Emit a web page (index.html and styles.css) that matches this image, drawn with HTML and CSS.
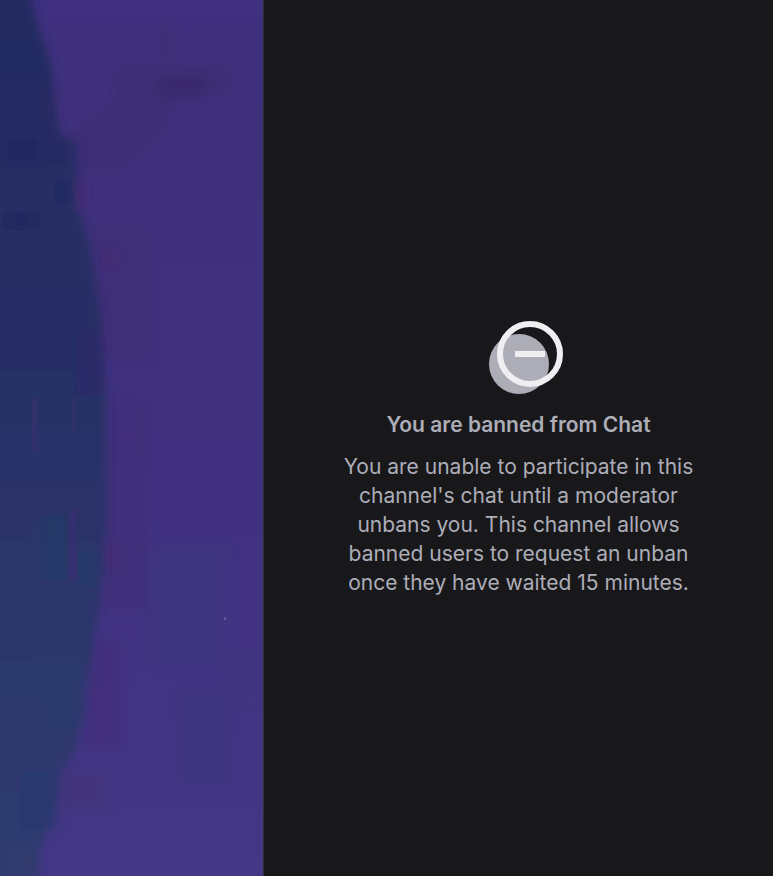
FILE: index.html
```
<!DOCTYPE html>
<html lang="en">
	<head>
		<meta charset="UTF-8">
		<meta name="viewport" content="width=device-width, initial-scale=1">
		<title>Chat</title>
		<link rel="stylesheet" href="styles.css">
	</head>

	<body>
		<div class="channel">
			<main class="player">
				<svg class="video" viewBox="0 0 263 876" preserveAspectRatio="none" aria-hidden="true">
					<defs>
						<linearGradient id="purple" x1="0" y1="0" x2="0" y2="1">
							<stop offset="0" stop-color="#3f3080"/>
							<stop offset="0.15" stop-color="#3f307b"/>
							<stop offset="0.5" stop-color="#403180"/>
							<stop offset="1" stop-color="#443786"/>
						</linearGradient>
						<linearGradient id="navy" x1="0" y1="0" x2="0" y2="1">
							<stop offset="0" stop-color="#242a61"/>
							<stop offset="0.45" stop-color="#273066"/>
							<stop offset="0.8" stop-color="#2d386c"/>
							<stop offset="1" stop-color="#2e3c70"/>
						</linearGradient>
						<filter id="soft" x="-20%" y="-5%" width="140%" height="110%">
							<feGaussianBlur stdDeviation="4 3"/>
						</filter>
					</defs>
					<rect width="263" height="876" fill="url(#purple)"/>
					<!-- compression blocks -->
					<g filter="url(#soft)" opacity=".7">
						<path d="M115 66h115v28h-50l-30 50-32 26H78v-40l40-30z" fill="#3b2c70" opacity=".8"/>
						<rect x="156" y="25" width="22" height="38" fill="#3c2e76"/>
						<rect x="160" y="77" width="46" height="20" fill="#382868"/>
						<rect x="90" y="230" width="60" height="130" fill="#3f2e76"/>
						<rect x="100" y="400" width="48" height="210" fill="#412f78"/>
						<rect x="150" y="546" width="75" height="120" fill="#3e3680"/>
						<rect x="85" y="640" width="35" height="110" fill="#432f7a"/>
						<rect x="180" y="690" width="50" height="95" fill="#3e367f"/>
						<rect x="226" y="655" width="37" height="50" fill="#43347f"/>
						<rect x="50" y="770" width="60" height="40" fill="#42347c"/>
					</g>
					<!-- dark shape -->
					<g filter="url(#soft)">
						<path d="M-20-20H26L36 18 52 66 57 120 62 136 76 140 78 210 88 235 94 270 102 325 106 400 106 520 103 575 94 640 86 690 76 750 60 775 56 810 40 850 38 896H-20z" fill="url(#navy)"/>
						<g opacity=".6">
							<rect x="6" y="140" width="32" height="22" fill="#222560"/>
							<rect x="4" y="212" width="34" height="18" fill="#232660"/>
							<rect x="54" y="180" width="14" height="24" fill="#1f2a66"/>
							<rect x="77" y="330" width="26" height="65" fill="#2d2a68"/>
							<rect x="41" y="515" width="26" height="64" fill="#263a66"/>
							<rect x="79" y="550" width="17" height="36" fill="#253a6c"/>
							<rect x="41" y="660" width="31" height="70" fill="#293a6a"/>
							<rect x="79" y="672" width="7" height="56" fill="#2c3874"/>
							<rect x="20" y="770" width="38" height="60" fill="#2c3872"/>
							<rect x="5" y="845" width="30" height="50" fill="#333a6c"/>
						</g>
					</g>
					<g fill="#392e70">
						<rect x="32" y="398" width="6" height="55" opacity=".5"/>
						<rect x="73" y="398" width="3" height="35" opacity=".5"/>
						<rect x="69" y="508" width="8" height="74" opacity=".7"/>
					</g>
					<g fill="#4b2c70" filter="url(#soft)" opacity=".7">
						<rect x="77" y="180" width="7" height="30"/>
						<rect x="107" y="250" width="7" height="16"/>
						<rect x="108" y="546" width="7" height="22"/>
					</g>
					<rect x="224" y="617" width="2" height="3" fill="#69509a"/>
				</svg>
			</main>

			<aside class="chat">
				<svg class="ban-icon" viewBox="0 0 90 78" aria-hidden="true">
					<circle cx="45" cy="44" r="30" fill="#adadb8"/>
					<circle cx="56" cy="34" r="30" fill="none" stroke="#efeff1" stroke-width="6"/>
					<path d="M41 31h30v6H41z" fill="#efeff1"/>
				</svg>
				<h2 class="ban-title">You are banned from Chat</h2>
				<p class="ban-text">You are unable to participate in this channel's chat until a moderator unbans you. This channel allows banned users to request an unban once they have waited 15 minutes.</p>
			</aside>
		</div>
	</body>
</html>
```
FILE: styles.css
```
* {
	box-sizing: border-box;
}

body {
	margin: 0;
	background: #18181b;
	color: #adadb8;
	font-family: Inter, "Liberation Sans", sans-serif;
}

.channel {
	display: grid;
	grid-template-columns: 263fr 510fr;
	min-height: 100vh;
}

.player {
	position: relative;
	background: #403180;
}

/* fills the player whatever its height */
.video {
	position: absolute;
	width: 100%;
	height: 100%;
}

.chat {
	display: flex;
	flex-direction: column;
	align-items: center;
	justify-content: center;
	padding: 40px 72px 0;
	border-left: 1px solid #303034;
	background: #18181b;
	text-align: center;
}

.ban-icon {
	width: 90px;
	height: 78px;
}

.ban-title {
	margin: 12px 0;
	font-size: 21px;
	font-weight: 600;
	line-height: 30px;
}

.ban-text {
	margin: 0;
	font-size: 21px;
	line-height: 29px;
}
```
